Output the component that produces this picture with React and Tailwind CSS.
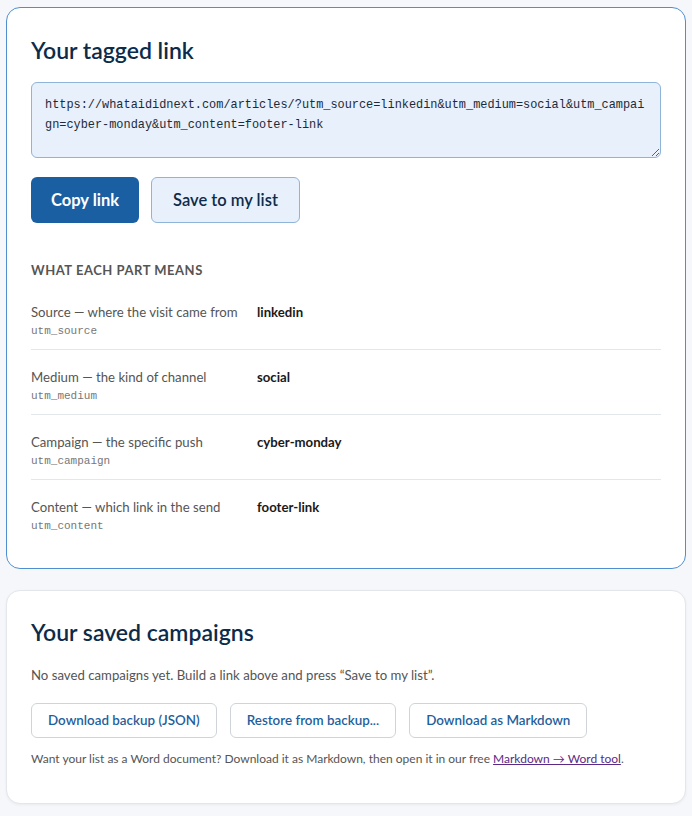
// App.jsx — UTM link result + saved campaigns panel
const URL =
  "https://whataididnext.com/articles/?utm_source=linkedin&utm_medium=social&utm_campaign=cyber-monday&utm_content=footer-link";

const PARTS = [
  { label: "Source — where the visit came from", key: "utm_source", value: "linkedin" },
  { label: "Medium — the kind of channel", key: "utm_medium", value: "social" },
  { label: "Campaign — the specific push", key: "utm_campaign", value: "cyber-monday" },
  { label: "Content — which link in the send", key: "utm_content", value: "footer-link" },
];

const mono = "font-['Liberation_Mono','DejaVu_Sans_Mono',monospace]";

export default function App() {
  return (
    <div className="min-h-screen bg-[#f5f7fa] px-[6px] pt-[7px] pb-3 font-['Lato',sans-serif]">
      {/* resultado */}
      <section className="rounded-[14px] border border-[#4f8fd0] bg-white px-6 pt-[26px] pb-6">
        <h2 className="text-[23px] leading-8 font-semibold text-[#0d2b4a]">Your tagged link</h2>
        <textarea
          readOnly
          value={URL}
          className={`mt-4 block h-[76px] w-full resize-y rounded-md border border-[#8fb4da] bg-[#e7f0fb] px-[13px] pt-3 text-[11.9px] leading-5 break-all text-[#1c2b3a] ${mono}`}
        />
        <div className="mt-[19px] flex gap-3">
          <button className="h-[46px] rounded-md bg-[#1b5fa3] px-5 text-[16.5px] font-bold text-white">
            Copy link
          </button>
          <button className="h-[46px] rounded-md border border-[#8fb4da] bg-[#e7f0fb] px-[21px] text-[16.5px] font-semibold text-[#0d2b4a]">
            Save to my list
          </button>
        </div>

        <h3 className="mt-[37px] mb-[5px] text-[13px] leading-5 font-bold tracking-[0.04em] text-[#555] uppercase">
          What each part means
        </h3>
        <div>
          {PARTS.map((p, i) => (
            <div
              key={p.key}
              className={`grid grid-cols-[226px_1fr] pt-[17px] pb-[9px] ${i < PARTS.length - 1 ? "border-b border-[#e3e6ea]" : ""}`}
            >
              <div>
                <div className="text-[13.2px] leading-5 text-[#555]">{p.label}</div>
                <div className={`text-[11px] leading-[18px] text-[#777] ${mono}`}>{p.key}</div>
              </div>
              <div className="text-[13.2px] leading-5 font-bold text-[#1a1a1a]">{p.value}</div>
            </div>
          ))}
        </div>
      </section>

      {/* campanhas salvas */}
      <section className="mt-[21px] rounded-[14px] border border-[#e3e6ea] bg-white px-6 pt-[25px] pb-[35px] shadow-[0_1px_3px_rgba(0,0,0,0.05)]">
        <h2 className="text-[23px] leading-8 font-semibold text-[#0d2b4a]">Your saved campaigns</h2>
        <p className="mt-[17px] text-[13.2px] leading-5 text-[#555]">
          No saved campaigns yet. Build a link above and press “Save to my list”.
        </p>
        <div className="mt-[18px] flex gap-[13px]">
          {["Download backup (JSON)", "Restore from backup...", "Download as Markdown"].map((t) => (
            <button
              key={t}
              className="h-[35px] rounded-md border border-[#cfd4da] bg-white px-4 text-[13.4px] font-semibold text-[#1f5f9c]"
            >
              {t}
            </button>
          ))}
        </div>
        <p className="mt-3 text-[12px] leading-[18px] text-[#555]">
          Want your list as a Word document? Download it as Markdown, then open it in our free{" "}
          <a href="#" className="text-[#5b2a86] underline">
            Markdown → Word tool
          </a>
          .
        </p>
      </section>
    </div>
  );
}
